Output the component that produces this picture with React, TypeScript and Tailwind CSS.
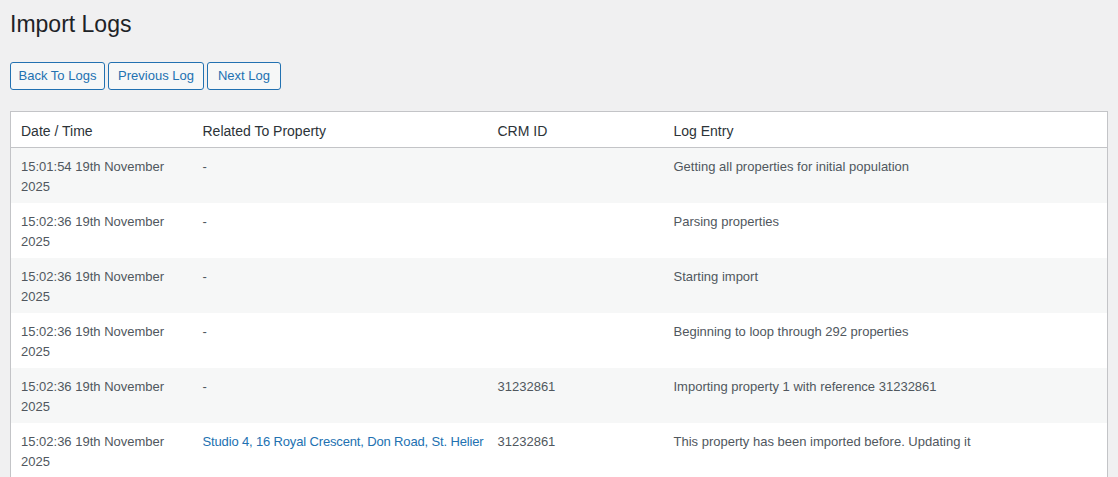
import React from 'react';

type LogRow = {
  time: string;
  property?: string;
  crmId?: string;
  entry: string;
};

const rows: LogRow[] = [
  { time: '15:01:54 19th November 2025', entry: 'Getting all properties for initial population' },
  { time: '15:02:36 19th November 2025', entry: 'Parsing properties' },
  { time: '15:02:36 19th November 2025', entry: 'Starting import' },
  { time: '15:02:36 19th November 2025', entry: 'Beginning to loop through 292 properties' },
  { time: '15:02:36 19th November 2025', crmId: '31232861', entry: 'Importing property 1 with reference 31232861' },
  {
    time: '15:02:36 19th November 2025',
    property: 'Studio 4, 16 Royal Crescent, Don Road, St. Helier',
    crmId: '31232861',
    entry: 'This property has been imported before. Updating it',
  },
];

const buttons = [
  { label: 'Back To Logs', width: 'w-[95px]' },
  { label: 'Previous Log', width: 'w-[96px]' },
  { label: 'Next Log', width: 'w-[74px]' },
];

const cell = 'px-[10px] pt-[9px] pb-[7px] align-top leading-[19.5px] text-[#50575e]';

export default function App() {
  return (
    <div className="min-h-screen bg-[#f0f0f1] px-[10px] font-['Liberation_Sans',Arial,sans-serif] text-[13px] text-[#3c434a]">
      <h1 className="pt-[9px] pb-[4px] text-[23px] leading-[30px] font-normal text-[#1d2327]">Import Logs</h1>

      {/* nav buttons */}
      <div className="mt-[19px] flex gap-[3px]">
        {buttons.map((b) => (
          <button
            key={b.label}
            className={`${b.width} h-[28px] rounded-[3px] border border-[#2271b1] bg-[#f6f7f7] text-center text-[13px] leading-[26px] whitespace-nowrap text-[#2271b1]`}
          >
            {b.label}
          </button>
        ))}
      </div>

      <table className="mt-[21px] w-[1098px] table-fixed border-collapse border border-[#c3c4c7] bg-white">
        <colgroup>
          <col className="w-[182px]" />
          <col className="w-[295px]" />
          <col className="w-[176px]" />
          <col />
        </colgroup>
        <thead>
          <tr className="border-b border-[#c3c4c7]">
            {['Date / Time', 'Related To Property', 'CRM ID', 'Log Entry'].map((h) => (
              <th key={h} className="px-[10px] pt-[10px] pb-[6px] text-left text-[14px] leading-[19px] font-normal text-[#2c3338]">
                {h}
              </th>
            ))}
          </tr>
        </thead>
        <tbody>
          {rows.map((row, index) => (
            <tr key={index} className={index % 2 === 0 ? 'bg-[#f6f7f7]' : 'bg-white'}>
              <td className={cell}>{row.time}</td>
              <td className={cell}>
                {row.property ? (
                  <a className="whitespace-nowrap tracking-[-0.15px] text-[#2271b1]">{row.property}</a>
                ) : (
                  '-'
                )}
              </td>
              <td className={cell}>{row.crmId}</td>
              <td className={cell}>{row.entry}</td>
            </tr>
          ))}
        </tbody>
      </table>
    </div>
  );
}
